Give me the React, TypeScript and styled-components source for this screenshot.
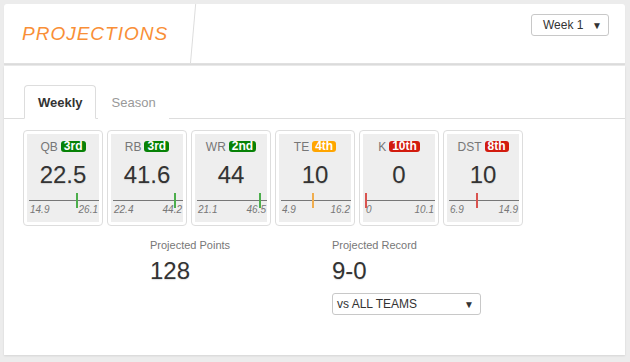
import styled, { createGlobalStyle } from 'styled-components';

const GlobalStyle = createGlobalStyle`
  html, body {
    margin: 0;
    padding: 0;
    background: #ececec;
    font-family: "Liberation Sans", Arial, sans-serif;
  }
`;

const Page = styled.div`
  display: flex;
  flex-direction: column;
  gap: 2px;
  padding: 4px 5px 7px 4px;
  height: 362px;
  box-sizing: border-box;
`;

const HeaderPanel = styled.div`
  background: #fff;
  border-radius: 3px 3px 0 0;
  box-shadow: 0 1px 1px rgba(0, 0, 0, 0.08);
  display: flex;
  align-items: stretch;
  height: 60px;
  border-bottom: 1px solid #e0e0e0;
  box-sizing: border-box;
`;

const TitleCell = styled.div`
  position: relative;
  width: 186px;
  display: flex;
  align-items: center;
  padding-left: 18px;
  box-sizing: border-box;

  &::after {
    content: '';
    position: absolute;
    top: 0;
    bottom: 0;
    right: -1px;
    width: 1px;
    background: #ddd;
    transform: skewX(-5deg);
    transform-origin: bottom;
  }
`;

const Title = styled.h1`
  margin: 0;
  font-size: 19px;
  font-weight: 400;
  font-style: italic;
  letter-spacing: 1px;
  color: #f98f37;
`;

const HeaderRight = styled.div`
  flex: 1;
  display: flex;
  justify-content: flex-end;
  align-items: flex-start;
  padding: 10px 16px 0 0;
`;

const SelectBox = styled.div<{ $width: number; $indent: number }>`
  width: ${(p) => p.$width}px;
  height: 22px;
  box-sizing: border-box;
  border: 1px solid #c8c8c8;
  border-radius: 3px;
  background: #fff;
  display: flex;
  align-items: center;
  justify-content: space-between;
  padding: 0 6px 0 ${(p) => p.$indent}px;
  font-size: 12px;
  color: #333;
`;

const Caret = styled.span`
  font-size: 10px;
  color: #333;
`;

const BodyPanel = styled.div`
  flex: 1;
  background: #fff;
  box-shadow: 0 1px 2px rgba(0, 0, 0, 0.1);
  padding-top: 19px;
`;

const TabList = styled.div`
  display: flex;
  padding-left: 20px;
  border-bottom: 1px solid #ddd;
  height: 33px;
`;

const Tab = styled.div<{ $active?: boolean }>`
  padding: 0 12px 0 13px;
  display: flex;
  align-items: center;
  font-size: 13px;
  font-weight: ${(p) => (p.$active ? 700 : 400)};
  color: ${(p) => (p.$active ? '#333' : '#999')};
  border: 1px solid ${(p) => (p.$active ? '#ddd' : 'transparent')};
  border-bottom: ${(p) => (p.$active ? '1px solid #fff' : 'none')};
  border-radius: 4px 4px 0 0;
  background: #fff;
  margin-bottom: -1px;
  margin-right: 2px;
`;

const CardRow = styled.div`
  display: flex;
  gap: 4px;
  padding: 11px 0 0 19px;
`;

const Card = styled.div`
  width: 80px;
  box-sizing: border-box;
  border: 1px solid #ddd;
  border-radius: 4px;
  padding: 3px;
`;

const CardInner = styled.div`
  background: #eee;
  height: 88px;
  display: flex;
  flex-direction: column;
`;

const PosRow = styled.div`
  display: flex;
  justify-content: center;
  align-items: center;
  gap: 3px;
  padding-top: 6px;
  height: 13px;
  font-size: 12px;
  color: #777;
`;

const Badge = styled.span<{ $color: string }>`
  background: ${(p) => p.$color};
  color: #fff;
  font-weight: 700;
  font-size: 12px;
  line-height: 11px;
  padding: 0 3px;
  border-radius: 3px;
`;

const Value = styled.div`
  text-align: center;
  font-size: 24px;
  line-height: 28px;
  color: #333;
  margin-top: 8px;
  text-shadow: 0 1px 1px rgba(0, 0, 0, 0.12);
`;

const Track = styled.div`
  position: relative;
  height: 1px;
  background: #777;
  margin: 11px 0 0 2px;
`;

const Marker = styled.div<{ $color: string }>`
  position: absolute;
  top: -7px;
  width: 2px;
  height: 15px;
  background: ${(p) => p.$color};
`;

const RangeRow = styled.div`
  display: flex;
  justify-content: space-between;
  padding: 0 1px 0 3px;
  margin-top: 3px;
  font-size: 10px;
  line-height: 12px;
  font-style: italic;
  color: #777;
`;

const Summary = styled.div`
  display: flex;
  padding: 12px 0 0 146px;
`;

const Stat = styled.div`
  width: 182px;
  display: flex;
  flex-direction: column;
`;

const StatLabel = styled.div`
  font-size: 11px;
  line-height: 15px;
  color: #777;
`;

const StatValue = styled.div`
  font-size: 24px;
  line-height: 30px;
  color: #333;
  margin-top: 3px;
  text-shadow: 0 1px 1px rgba(0, 0, 0, 0.12);
`;

const StatSelect = styled.div`
  margin-top: 7px;
`;

const colors = {
  green: { badge: '#078207', mark: '#4cae4c' },
  orange: { badge: '#ffa500', mark: '#f0ad4e' },
  red: { badge: '#d21b0e', mark: '#d9534f' },
};

type Tone = keyof typeof colors;

const positions: { pos: string; rank: string; tone: Tone; value: string; min: number; max: number; actual: number }[] = [
  { pos: 'QB', rank: '3rd', tone: 'green', value: '22.5', min: 14.9, max: 26.1, actual: 22.5 },
  { pos: 'RB', rank: '3rd', tone: 'green', value: '41.6', min: 22.4, max: 44.2, actual: 41.6 },
  { pos: 'WR', rank: '2nd', tone: 'green', value: '44', min: 21.1, max: 46.5, actual: 44 },
  { pos: 'TE', rank: '4th', tone: 'orange', value: '10', min: 4.9, max: 16.2, actual: 10 },
  { pos: 'K', rank: '10th', tone: 'red', value: '0', min: 0, max: 10.1, actual: 0 },
  { pos: 'DST', rank: '8th', tone: 'red', value: '10', min: 6.9, max: 14.9, actual: 10 },
];

const PositionCard = ({ pos, rank, tone, value, min, max, actual }: (typeof positions)[number]) => {
  const pct = (actual - min) / (max - min);
  return (
    <Card>
      <CardInner>
        <PosRow>
          {pos}
          <Badge $color={colors[tone].badge}>{rank}</Badge>
        </PosRow>
        <Value>{value}</Value>
        <Track>
          <Marker $color={colors[tone].mark} style={{ left: `${Math.round(pct * 69)}px` }} />
        </Track>
        <RangeRow>
          <span>{min}</span>
          <span>{max}</span>
        </RangeRow>
      </CardInner>
    </Card>
  );
};

export default function App() {
  return (
    <>
      <GlobalStyle />
      <Page>
        <HeaderPanel>
          <TitleCell>
            <Title>PROJECTIONS</Title>
          </TitleCell>
          <HeaderRight>
            <SelectBox $width={78} $indent={11}>
              <span>Week 1</span>
              <Caret>▼</Caret>
            </SelectBox>
          </HeaderRight>
        </HeaderPanel>
        <BodyPanel>
          <TabList>
            <Tab $active>Weekly</Tab>
            <Tab>Season</Tab>
          </TabList>
          <CardRow>
            {positions.map((p) => (
              <PositionCard key={p.pos} {...p} />
            ))}
          </CardRow>
          <Summary>
            <Stat>
              <StatLabel>Projected Points</StatLabel>
              <StatValue>128</StatValue>
            </Stat>
            <Stat>
              <StatLabel>Projected Record</StatLabel>
              <StatValue>9-0</StatValue>
              <StatSelect>
                <SelectBox $width={149} $indent={4}>
                  <span>vs ALL TEAMS</span>
                  <Caret>▼</Caret>
                </SelectBox>
              </StatSelect>
            </Stat>
          </Summary>
        </BodyPanel>
      </Page>
    </>
  );
}
